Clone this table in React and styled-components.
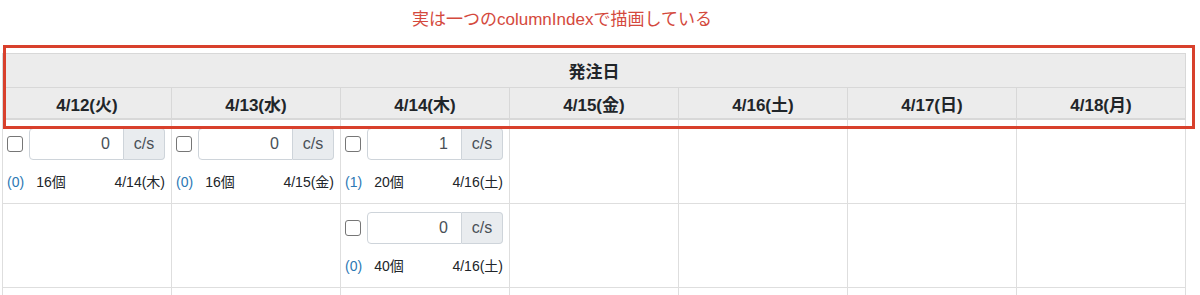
import React from 'react';
import styled, { createGlobalStyle } from 'styled-components';

const GlobalStyle = createGlobalStyle`
  body {
    margin: 0;
    background: #fff;
    color: #212529;
    font-family: "Liberation Sans", "Noto Sans CJK JP", sans-serif;
  }
`;

const Page = styled.div`
  position: relative;
  height: 295px;
  overflow: hidden;
`;

const Caption = styled.div`
  height: 53px;
  box-sizing: border-box;
  padding: 9px 0 0 412px;
  font-size: 17px;
  line-height: 22px;
  color: #d4493d;
`;

// red frame drawn over the header rows
const Highlight = styled.div`
  position: absolute;
  top: 45px;
  left: 3px;
  width: 1192px;
  height: 84px;
  box-sizing: border-box;
  border: 3px solid #d8402c;
  pointer-events: none;
`;

const Grid = styled.table`
  margin-left: 2px;
  width: 1184px;
  table-layout: fixed;
  border-collapse: collapse;
`;

const HeadCell = styled.th`
  background: #ececec;
  border: 1px solid #d8d8d8;
  border-bottom-width: ${(p) => (p.$last ? '2px' : '1px')};
  height: ${(p) => p.$h}px;
  padding: 0;
  font-size: 17px;
  font-weight: bold;
  text-align: center;
  vertical-align: middle;
`;

const Cell = styled.td`
  border: 1px solid #dedede;
  vertical-align: top;
  padding: 8px 6px 11px 4px;
`;

const EntryTop = styled.div`
  display: flex;
  align-items: center;
  gap: 6px;
`;

const Check = styled.input`
  appearance: none;
  flex: none;
  width: 16px;
  height: 16px;
  margin: 0;
  border: 1px solid #767676;
  border-radius: 3px;
  background: #fff;
`;

const InputGroup = styled.div`
  flex: 1;
  min-width: 0;
  display: flex;
  height: 32px;
`;

const QtyInput = styled.input`
  flex: 1;
  width: 0;
  min-width: 0;
  box-sizing: border-box;
  height: 100%;
  margin: 0;
  padding: 0 13px;
  border: 1px solid #ced4da;
  border-radius: 4px 0 0 4px;
  font: inherit;
  font-size: 16px;
  color: #495057;
  text-align: right;
  outline: none;
`;

const Unit = styled.span`
  flex: none;
  width: 41px;
  box-sizing: border-box;
  display: flex;
  align-items: center;
  justify-content: center;
  background: #e9ecef;
  border: 1px solid #ced4da;
  border-left: none;
  border-radius: 0 4px 4px 0;
  font-size: 16px;
  color: #495057;
`;

const EntryInfo = styled.div`
  display: flex;
  align-items: center;
  margin-top: 12px;
  font-size: 14px;
  line-height: 20px;
`;

const Count = styled.span`
  color: #2c78b4;
`;

const Pieces = styled.span`
  margin-left: 12px;
`;

const Due = styled.span`
  margin-left: auto;
`;

const days = ['4/12(火)', '4/13(水)', '4/14(木)', '4/15(金)', '4/16(土)', '4/17(日)', '4/18(月)'];

const rows = [
  [
    { qty: 0, count: 0, pcs: 16, date: '4/14(木)' },
    { qty: 0, count: 0, pcs: 16, date: '4/15(金)' },
    { qty: 1, count: 1, pcs: 20, date: '4/16(土)' },
    null, null, null, null,
  ],
  [null, null, { qty: 0, count: 0, pcs: 40, date: '4/16(土)' }, null, null, null, null],
  [
    { qty: 0, count: 0, pcs: 8, date: '4/15(金)' },
    { qty: 0, count: 0, pcs: 8, date: '4/16(土)' },
    { qty: 0, count: 0, pcs: 12, date: '4/17(日)' },
    null, null, null, null,
  ],
];

const Entry = ({ qty, count, pcs, date }) => (
  <>
    <EntryTop>
      <Check type="checkbox" />
      <InputGroup>
        <QtyInput readOnly value={qty} />
        <Unit>c/s</Unit>
      </InputGroup>
    </EntryTop>
    <EntryInfo>
      <Count>({count})</Count>
      <Pieces>{pcs}個</Pieces>
      <Due>{date}</Due>
    </EntryInfo>
  </>
);

const App = () => {
  return (
    <Page>
      <GlobalStyle />
      <Caption>実は一つのcolumnIndexで描画している</Caption>
      <Grid>
        <thead>
          <tr>
            <HeadCell colSpan={7} $h={33}>発注日</HeadCell>
          </tr>
          <tr>
            {days.map((d) => (
              <HeadCell key={d} $h={30} $last>
                {d}
              </HeadCell>
            ))}
          </tr>
        </thead>
        <tbody>
          {rows.map((row, i) => (
            <tr key={i}>
              {row.map((e, j) => (
                <Cell key={j}>{e && <Entry {...e} />}</Cell>
              ))}
            </tr>
          ))}
        </tbody>
      </Grid>
      <Highlight />
    </Page>
  );
};

export default App;
